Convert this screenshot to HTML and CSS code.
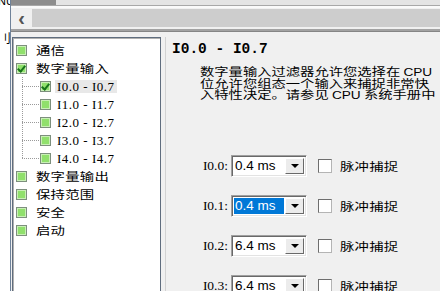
FILE: index.html
```html
<!DOCTYPE html>
<html>
<head>
    <meta charset="UTF-8">
    <title>数字量输入</title>
    <link rel="stylesheet" href="styles.css">
</head>
<body>
<div class="window">
    <div class="edge">
        <div class="frag">NU</div>
        <div class="frag2">刂</div>
    </div>
    <div class="main">
        <div class="topstrip"><div class="thumb"></div></div>
        <div class="gap-light"></div>
        <div class="scroll">
            <div class="arrow">&lsaquo;</div>
            <div class="bar"></div>
        </div>
        <div class="shelf"></div>
        <div class="content">
            <div class="tree">
                <div class="node"><span class="box"></span><span class="cn">通信</span></div>
                <div class="node"><span class="box on"></span><span class="cn">数字量输入</span></div>
                <div class="kids">
                    <div class="kid"><span class="box on"></span><span class="io sel">I0.0 - I0.7</span></div>
                    <div class="kid"><span class="box"></span><span class="io">I1.0 - I1.7</span></div>
                    <div class="kid"><span class="box"></span><span class="io">I2.0 - I2.7</span></div>
                    <div class="kid"><span class="box"></span><span class="io">I3.0 - I3.7</span></div>
                    <div class="kid last"><span class="box"></span><span class="io">I4.0 - I4.7</span></div>
                </div>
                <div class="node"><span class="box"></span><span class="cn">数字量输出</span></div>
                <div class="node"><span class="box"></span><span class="cn">保持范围</span></div>
                <div class="node"><span class="box"></span><span class="cn">安全</span></div>
                <div class="node"><span class="box"></span><span class="cn">启动</span></div>
            </div>
            <div class="panel">
                <h1>I0.0 - I0.7</h1>
                <div class="desc">
                    <div>数字量输入过滤器允许您选择在 <span class="lat">CPU</span></div>
                    <div>位允许您组态一个输入来捕捉非常快</div>
                    <div>入特性决定。请参见 <span class="lat">CPU</span> 系统手册中</div>
                </div>
                <div class="rows">
                    <div class="row">
                        <span class="lbl">I0.0:</span>
                        <div class="combo"><span class="value">0.4 ms</span><span class="btn"></span></div>
                        <span class="check"></span><span class="cn">脉冲捕捉</span>
                    </div>
                    <div class="row">
                        <span class="lbl">I0.1:</span>
                        <div class="combo focus"><span class="value">0.4 ms</span><span class="btn"></span></div>
                        <span class="check"></span><span class="cn">脉冲捕捉</span>
                    </div>
                    <div class="row">
                        <span class="lbl">I0.2:</span>
                        <div class="combo"><span class="value">6.4 ms</span><span class="btn"></span></div>
                        <span class="check"></span><span class="cn">脉冲捕捉</span>
                    </div>
                    <div class="row">
                        <span class="lbl">I0.3:</span>
                        <div class="combo"><span class="value">6.4 ms</span><span class="btn"></span></div>
                        <span class="check"></span><span class="cn">脉冲捕捉</span>
                    </div>
                </div>
            </div>
        </div>
    </div>
</div>
</body>
</html>
```

FILE: styles.css
```css
body {
    margin: 0;
    width: 440px;
    height: 291px;
    overflow: hidden;
    background-color: #f0f0f0;
    font-family: "Liberation Sans", sans-serif;
    color: #000;
}
.window {
    display: flex;
    height: 291px;
}
.edge {
    width: 10px;
    flex: none;
    background-color: #fff;
    border-right: 1px solid #6f8299;
    overflow: hidden;
}
.frag {
    font-size: 11px;
    line-height: 11px;
    margin-top: -4px;
    margin-left: -2px;
}
.frag2 {
    font-family: "Noto Sans CJK SC", sans-serif;
    font-size: 12px;
    line-height: 12px;
    margin-top: 25px;
    margin-left: -1px;
}
.main {
    flex: 1;
    display: flex;
    flex-direction: column;
    min-width: 0;
}
.topstrip {
    height: 5px;
    display: flex;
    background-color: #e4e4e4;
    border-bottom: 1px solid #a8a8a8;
}
.topstrip .thumb {
    width: 45px;
    background-color: #8d8d8d;
}
.gap-light {
    height: 2px;
    background-color: #fafafa;
}
.scroll {
    height: 20px;
    display: flex;
    align-items: center;
}
.arrow {
    width: 21px;
    text-align: center;
    font-size: 20px;
    line-height: 18px;
    font-weight: bold;
    color: #555;
}
.bar {
    flex: 1;
    height: 18px;
    background-color: #cdcdcd;
}
.shelf {
    height: 2px;
    margin-top: 1px;
    background-color: #a2a2a2;
    border-bottom: 1px solid #858585;
}
.content {
    flex: 1;
    display: flex;
    margin-top: 5px;
    min-height: 0;
}
.tree {
    width: 149px;
    box-sizing: border-box;
    margin-left: 1px;
    padding-top: 3px;
    background-color: #fff;
    border: 1px solid #5f6d7e;
    border-bottom: none;
    box-shadow: inset 1px 1px 0 #b0b0b0;
}
.node, .kid {
    display: flex;
    align-items: center;
    height: 18px;
}
.node {
    padding-left: 3px;
}
.node .box {
    margin-right: 9px;
}
.box {
    width: 11px;
    height: 11px;
    flex: none;
    box-sizing: border-box;
    border: 1px solid #7d8f7d;
    background-color: #90e06c;
    box-shadow: inset 0 0 0 1px #c9efb6;
    position: relative;
}
.box.on::after {
    content: "";
    position: absolute;
    left: 2px;
    top: 0px;
    width: 3px;
    height: 6px;
    border-right: 2px solid #17741a;
    border-bottom: 2px solid #17741a;
    transform: rotate(40deg);
}
/* the dialog is shown stretched sideways, so CJK text is widened */
.cn {
    display: inline-block;
    font-family: "Noto Sans CJK SC", sans-serif;
    font-size: 11.5px;
    line-height: 14px;
    letter-spacing: 0.2px;
    white-space: nowrap;
    transform: scaleX(1.25);
    transform-origin: left center;
}
.kids {
    margin-left: 9px;
}
.kid::before {
    content: "";
    width: 18px;
    height: 18px;
    flex: none;
    background-image:
        repeating-linear-gradient(to bottom, #9a9a9a 0 1px, transparent 1px 2px),
        repeating-linear-gradient(to right, #9a9a9a 0 1px, transparent 1px 2px);
    background-size: 1px 100%, 100% 1px;
    background-position: 0 0, 0 50%;
    background-repeat: no-repeat;
}
.kid.last::before {
    background-size: 1px 50%, 100% 1px;
}
.io {
    font-family: "Liberation Serif", serif;
    font-size: 13px;
    letter-spacing: 0.5px;
    line-height: 13px;
    margin-left: 4px;
    padding: 0 2px;
    white-space: nowrap;
}
.io.sel {
    background-color: #e8e8e8;
}
.panel {
    flex: 1;
    min-width: 0;
    margin-left: 4px;
    padding: 4px 0 0 6px;
    border-left: 1px solid #d2d2d2;
}
h1 {
    margin: 0;
    font-family: "Liberation Mono", monospace;
    font-size: 14.5px;
    line-height: 16px;
    font-weight: bold;
    white-space: nowrap;
}
.desc {
    margin: 9px 0 0 28px;
    font-family: "Noto Sans CJK SC", sans-serif;
    font-size: 11px;
    white-space: nowrap;
    transform: scaleX(1.3);
    transform-origin: left top;
}
.desc div {
    height: 11.5px;
    line-height: 11.5px;
}
.lat {
    font-family: "Liberation Sans", sans-serif;
    font-size: 10.5px;
    line-height: 11px;
}
.rows {
    margin: 54px 0 0 28px;
    display: flex;
    flex-direction: column;
    gap: 18px;
}
.row {
    display: flex;
    align-items: center;
    height: 22px;
    white-space: nowrap;
}
.lbl {
    width: 28px;
    margin-right: 3px;
    text-align: right;
    font-family: "Liberation Serif", serif;
    font-size: 13.5px;
}
.combo {
    width: 76px;
    height: 22px;
    box-sizing: border-box;
    display: flex;
    padding: 2px;
    background-color: #fff;
    border: 1px solid;
    border-color: #a0a0a0 #fff #fff #a0a0a0;
    box-shadow: inset 1px 1px 0 #696969, inset -1px -1px 0 #e3e3e3;
}
.value {
    flex: 1;
    font-size: 13.5px;
    line-height: 16px;
    padding-left: 1px;
    margin-right: 1px;
}
.combo.focus .value {
    background-color: #0078d7;
    color: #fff;
}
.btn {
    width: 19px;
    box-sizing: border-box;
    display: flex;
    align-items: center;
    justify-content: center;
    background-color: #ececec;
    border: 1px solid;
    border-color: #fff #696969 #696969 #fff;
}
.btn::after {
    content: "";
    border-top: 4px solid #000;
    border-left: 4px solid transparent;
    border-right: 4px solid transparent;
}
.check {
    width: 14px;
    height: 14px;
    box-sizing: border-box;
    margin: 0 8px 0 11px;
    background-color: #fff;
    border: 1px solid;
    border-color: #6e6e6e #b4b4b4 #b4b4b4 #6e6e6e;
}
```
